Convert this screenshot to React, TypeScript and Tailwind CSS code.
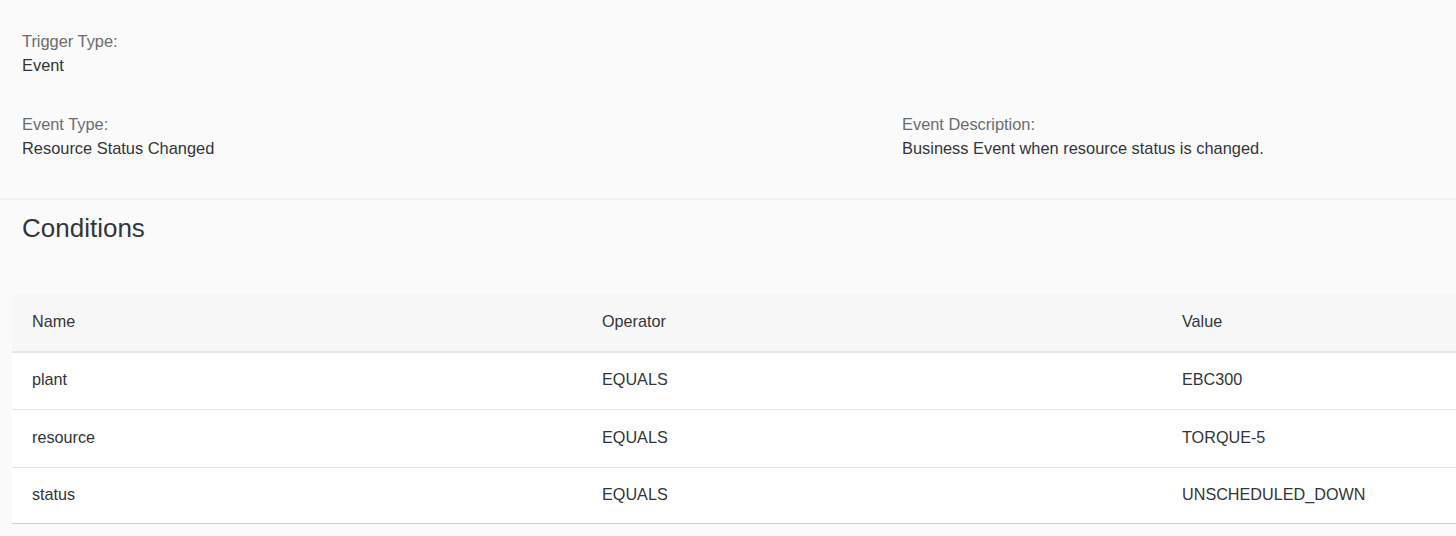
import React from 'react';

const conditions = [
  { name: 'plant', operator: 'EQUALS', value: 'EBC300', h: 'h-[57px]' },
  { name: 'resource', operator: 'EQUALS', value: 'TORQUE-5', h: 'h-[58px]' },
  { name: 'status', operator: 'EQUALS', value: 'UNSCHEDULED_DOWN', h: 'h-[56px]' },
];

const Field: React.FC<{ label: string; value: string }> = ({ label, value }) => (
  <div>
    <div className="text-[16.4px] leading-6 text-[#6a6d70]">{label}</div>
    <div className="text-[16.4px] leading-[25px] text-[#32363a]">{value}</div>
  </div>
);

const App: React.FC = () => {
  return (
    <div
      className="min-h-screen w-full overflow-hidden bg-[#fafafa] text-[#32363a]"
      style={{ fontFamily: '"Liberation Sans", Arial, sans-serif' }}
    >
      {/* trigger details */}
      <div className="pl-[22px] pt-[29px] pb-[37px] border-b-2 border-[#f1f1f1]">
        <Field label="Trigger Type:" value="Event" />
        <div className="mt-[34px] grid grid-cols-[880px_1fr]">
          <Field label="Event Type:" value="Resource Status Changed" />
          <Field label="Event Description:" value="Business Event when resource status is changed." />
        </div>
      </div>

      {/* conditions */}
      <div className="pt-3">
        <h2 className="pl-[22px] text-[26px] leading-8 font-normal text-[#32363a]">Conditions</h2>
        <div className="ml-3 mt-[50px] text-[16.2px]">
          <div className="grid grid-cols-[570px_580px_1fr] h-[59px] items-center pb-[3px] bg-[#f7f7f7] border-b-2 border-[#e5e5e5]">
            <div className="pl-5">Name</div>
            <div className="pl-5">Operator</div>
            <div className="pl-5">Value</div>
          </div>
          {conditions.map((c, i) => (
            <div
              key={c.name}
              className={`grid grid-cols-[570px_580px_1fr] items-center pb-[3px] bg-white border-b ${c.h} ${
                i === conditions.length - 1 ? 'border-[#cfcfcf]' : 'border-[#e5e5e5]'
              }`}
            >
              <div className="pl-5">{c.name}</div>
              <div className="pl-5">{c.operator}</div>
              <div className="pl-5">{c.value}</div>
            </div>
          ))}
        </div>
      </div>
    </div>
  );
};

export default App;
